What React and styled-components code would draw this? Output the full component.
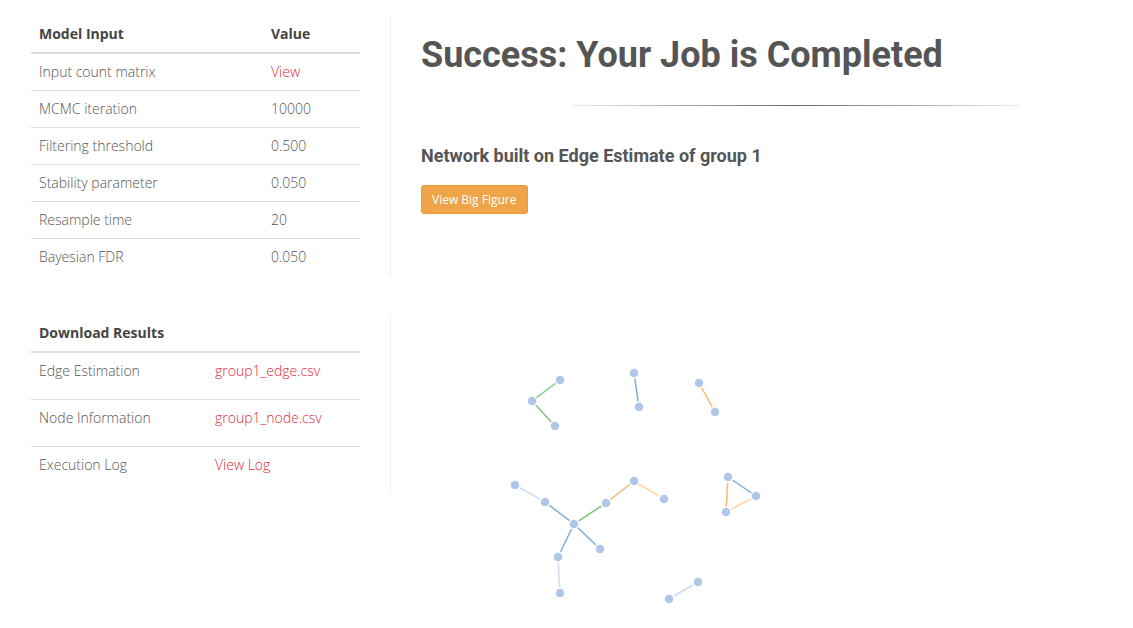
import React from "react";
import styled, { createGlobalStyle } from "styled-components";

const COLORS = {
  text: "#555",
  head: "#444",
  link: "#dd2c38",
  border: "#ddd",
  divider: "#eee",
  warning: "#eea447",
};

const GlobalStyle = createGlobalStyle`
  body {
    margin: 0;
    background: #fff;
    font-family: "Open Sans", "Liberation Sans", sans-serif;
    color: ${COLORS.text};
  }
`;

const MODEL_INPUT = [
  { label: "Input count matrix", value: "View", link: true },
  { label: "MCMC iteration", value: "10000" },
  { label: "Filtering threshold", value: "0.500" },
  { label: "Stability parameter", value: "0.050" },
  { label: "Resample time", value: "20" },
  { label: "Bayesian FDR", value: "0.050" },
];

const DOWNLOADS = [
  { label: "Edge Estimation", value: "group1_edge.csv" },
  { label: "Node Information", value: "group1_node.csv" },
  { label: "Execution Log", value: "View Log" },
];

const NODES = {
  a: [139, 65], b: [111, 86], c: [134, 111],
  d: [213, 58], e: [218, 92],
  f: [278, 68], g: [294, 97],
  h: [94, 170], i: [124, 187], j: [153, 209], k: [185, 188],
  l: [213, 166], m: [243, 184], n: [179, 234], o: [137, 242], p: [139, 278],
  q: [307, 162], r: [335, 181], s: [305, 197],
  t: [277, 267], u: [248, 284],
};

const EDGE_COLORS = {
  green: "#2ca02c",
  blue: "#1f77b4",
  lightBlue: "#aec7e8",
  orange: "#ff7f0e",
  lightOrange: "#ffbb78",
};

const EDGES = [
  ["a", "b", "green"],
  ["b", "c", "green"],
  ["d", "e", "blue"],
  ["f", "g", "orange"],
  ["h", "i", "lightBlue"],
  ["i", "j", "blue"],
  ["j", "k", "green"],
  ["k", "l", "orange"],
  ["l", "m", "lightOrange"],
  ["j", "n", "blue"],
  ["j", "o", "blue"],
  ["o", "p", "lightBlue"],
  ["q", "r", "blue"],
  ["q", "s", "orange"],
  ["s", "r", "lightOrange"],
  ["t", "u", "lightBlue"],
];

const Network = () => (
  <Graph width="700" height="313" viewBox="0 0 700 313">
    {EDGES.map(([from, to, color]) => (
      <line
        key={from + to}
        x1={NODES[from][0]}
        y1={NODES[from][1]}
        x2={NODES[to][0]}
        y2={NODES[to][1]}
        stroke={EDGE_COLORS[color]}
        strokeOpacity="0.6"
        strokeWidth="1.5"
      />
    ))}
    {Object.entries(NODES).map(([id, [x, y]]) => (
      <circle key={id} cx={x} cy={y} r="5" fill="#aec7e8" stroke="#fff" strokeWidth="1.5" />
    ))}
  </Graph>
);

const App = () => (
  <Page>
    <GlobalStyle />
    <Row>
      <LeftCol>
        <Table>
          <thead>
            <tr>
              <Th $width={232}>Model Input</Th>
              <Th>Value</Th>
            </tr>
          </thead>
          <tbody>
            {MODEL_INPUT.map((row) => (
              <tr key={row.label}>
                <Td>{row.label}</Td>
                <Td>{row.link ? <Link href="#">{row.value}</Link> : row.value}</Td>
              </tr>
            ))}
          </tbody>
        </Table>
      </LeftCol>
      <RightCol>
        <Title>Success: Your Job is Completed</Title>
        <Separator />
        <SubTitle>Network built on Edge Estimate of group 1</SubTitle>
        <Button type="button">View Big Figure</Button>
      </RightCol>
    </Row>
    <Row $spaced>
      <LeftCol>
        <Table>
          <thead>
            <tr>
              <Th $width={176}>Download Results</Th>
              <Th />
            </tr>
          </thead>
          <tbody>
            {DOWNLOADS.map((row) => (
              <tr key={row.label}>
                <Td $tall>{row.label}</Td>
                <Td $tall>
                  <Link href="#">{row.value}</Link>
                </Td>
              </tr>
            ))}
          </tbody>
        </Table>
      </LeftCol>
      <RightCol>
        <Network />
      </RightCol>
    </Row>
  </Page>
);

const Page = styled.div`
  padding-top: 16px;
`;

const Row = styled.div`
  display: flex;
  align-items: flex-start;
  margin-top: ${(p) => (p.$spaced ? "40px" : "0")};
`;

const LeftCol = styled.div`
  flex: 0 0 auto;
  width: 329px;
  padding: 0 30px 0 31px;
  border-right: 1px solid ${COLORS.divider};
`;

const RightCol = styled.div`
  flex: 1;
  padding-left: 30px;
  min-width: 0;
`;

const Table = styled.table`
  width: 100%;
  border-collapse: collapse;
  border-spacing: 0;
  font-size: 14px;
  line-height: 20px;
`;

const Th = styled.th`
  width: ${(p) => (p.$width ? `${p.$width}px` : "auto")};
  box-sizing: border-box;
  padding: 8px;
  text-align: left;
  font-weight: 700;
  color: ${COLORS.head};
  border-bottom: 2px solid ${COLORS.border};
`;

const Td = styled.td`
  padding: ${(p) => (p.$tall ? "8px 8px 18px" : "8px")};
  color: ${COLORS.text};
  font-weight: 300;
  border-top: 1px solid ${COLORS.border};
  text-align: left;
  vertical-align: top;
  tr:first-child > & {
    border-top: none;
  }
`;

const Link = styled.a`
  color: ${COLORS.link};
  text-decoration: none;
`;

const Title = styled.h1`
  margin: 19px 0 0;
  font-family: Roboto, "Liberation Sans", sans-serif;
  font-weight: 700;
  font-size: 36px;
  line-height: 40px;
  color: ${COLORS.text};
`;

const Separator = styled.hr`
  width: 449px;
  height: 1px;
  margin: 30px 0 0 150px;
  border: 0;
  background: linear-gradient(to right, #eee, #666, #eee);
`;

const SubTitle = styled.h3`
  margin: 40px 0 0;
  font-family: Roboto, "Liberation Sans", sans-serif;
  font-weight: 700;
  font-size: 18px;
  line-height: 20px;
  color: ${COLORS.text};
`;

const Button = styled.button`
  display: block;
  margin-top: 19px;
  padding: 5px 10px;
  height: 29px;
  border: 1px solid #e99a35;
  border-radius: 3px;
  background: ${COLORS.warning};
  color: #fff;
  font-family: "Open Sans", "Liberation Sans", sans-serif;
  font-size: 12px;
  line-height: 17px;
  cursor: pointer;
`;

const Graph = styled.svg`
  display: block;
`;

export default App;
